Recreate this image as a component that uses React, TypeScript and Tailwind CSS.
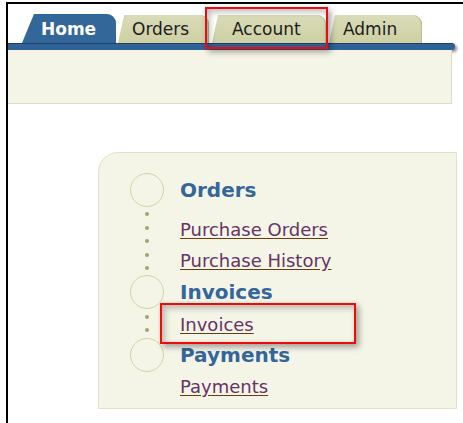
import React from 'react';

type Tab = {
  label: string;
  width: string;
  pad: string;
  active?: boolean;
};

type Section = {
  title: string;
  links: string[];
};

const tabs: Tab[] = [
  { label: 'Home', width: 'w-[94px]', pad: 'pl-[19px]', active: true },
  { label: 'Orders', width: 'w-[91px]', pad: 'pl-[14px]' },
  { label: 'Account', width: 'w-[114px]', pad: 'pl-[20px]' },
  { label: 'Admin', width: 'w-[93px]', pad: 'pl-[14px]' },
];

const sections: Section[] = [
  { title: 'Orders', links: ['Purchase Orders', 'Purchase History'] },
  { title: 'Invoices', links: ['Invoices'] },
  { title: 'Payments', links: ['Payments'] },
];

const TabButton = ({ tab }: { tab: Tab }) => {
  if (tab.active) {
    return (
      <div
        className={`${tab.width} ${tab.pad} h-[29px] flex items-center pt-[1px] bg-[#336699] rounded-tr-[9px] [clip-path:polygon(12px_0,100%_0,100%_100%,0_100%)] text-white font-bold text-[17px] leading-[20px]`}
      >
        {tab.label}
      </div>
    );
  }
  return (
    <div
      className={`${tab.width} ${tab.pad} h-[28px] mt-[1px] flex items-center bg-gradient-to-b from-[#dadcb8] to-[#cdd0a3] rounded-tr-[9px] [clip-path:polygon(6px_0,100%_0,100%_100%,0_100%)] shadow-[inset_-1px_0_0_#b9bc8e] text-[#1c1c1c] text-[17px] leading-[20px]`}
    >
      {tab.label}
    </div>
  );
};

const Dots = ({ count, className }: { count: number; className: string }) => (
  <div className={`col-start-1 flex flex-col items-center justify-between ${className}`}>
    {Array.from({ length: count }).map((_, i) => (
      <span key={i} className="block w-[4px] h-[4px] rounded-full bg-[#a2a36f]" />
    ))}
  </div>
);

const Circle = ({ row }: { row: string }) => (
  <div className={`col-start-1 ${row} w-[34px] h-[34px] rounded-full border-[1.5px] border-[#d3d4a6]`} />
);

const Heading = ({ row, children }: { row: string; children: React.ReactNode }) => (
  <div className={`col-start-2 ${row} self-center text-[20px] leading-[24px] font-bold text-[#35669b]`}>
    {children}
  </div>
);

const NavLink = ({ row, className, children }: { row: string; className: string; children: React.ReactNode }) => (
  <a
    href="#"
    className={`col-start-2 ${row} ${className} justify-self-start text-[18px] leading-[21px] text-[#663366] underline decoration-[#6b3a0e] underline-offset-[2px]`}
  >
    {children}
  </a>
);

export default function App() {
  return (
    <div className="relative w-[463px] h-[423px] bg-white overflow-hidden font-['DejaVu_Sans','Verdana',sans-serif]">
      <div className="ml-[6px] mt-[2px] h-[421px] border-l-2 border-t-2 border-black">
        {/* tab strip */}
        <div className="flex items-end gap-[2px] pt-[10px] pl-[14px]">
          {tabs.map((t, i) => (
            <div key={t.label} className={i > 1 ? 'ml-[1px]' : ''}>
              <TabButton tab={t} />
            </div>
          ))}
        </div>
        <div className="w-[447px] h-[7px] bg-[#2f6297] border-t border-[#1e406b] rounded-r-full shadow-[2px_2px_3px_rgba(0,0,0,0.45)]" />
        <div className="w-[444px] h-[54px] bg-[#f4f5e7] border-r border-b border-[#dcdfc2]" />

        {/* task list panel */}
        <div className="ml-[90px] mt-[48px] w-[359px] h-[257px] bg-[#f4f5e7] border border-[#dfe2c5] rounded-tl-[20px] pt-[20px] pl-[31px]">
          <div className="grid grid-cols-[34px_1fr] gap-x-[16px] grid-rows-[34px_34px_34px_34px_29px_34px_31px]">
            <Circle row="row-start-1" />
            <Heading row="row-start-1">{sections[0].title}</Heading>
            <Dots count={5} className="row-start-2 row-span-2 py-[5px]" />
            <NavLink row="row-start-2" className="self-end mb-[1px]">
              {sections[0].links[0]}
            </NavLink>
            <NavLink row="row-start-3" className="self-end mb-[4px]">
              {sections[0].links[1]}
            </NavLink>

            <Circle row="row-start-4" />
            <Heading row="row-start-4">{sections[1].title}</Heading>
            <Dots count={2} className="row-start-5 py-[6px]" />
            <NavLink row="row-start-5" className="self-end mb-[3px]">
              {sections[1].links[0]}
            </NavLink>

            <Circle row="row-start-6" />
            <Heading row="row-start-6">{sections[2].title}</Heading>
            <NavLink row="row-start-7" className="self-start mt-[4px]">
              {sections[2].links[0]}
            </NavLink>
          </div>
        </div>
      </div>

      {/* callout frames */}
      <div className="absolute left-[205px] top-[7px] w-[123px] h-[42px] border-2 border-[#f20a0a] shadow-[3px_3px_6px_rgba(0,0,0,0.35),inset_3px_3px_6px_rgba(0,0,0,0.25)]" />
      <div className="absolute left-[160px] top-[303px] w-[196px] h-[41px] border-2 border-[#f20a0a] shadow-[3px_3px_6px_rgba(0,0,0,0.35),inset_3px_3px_6px_rgba(0,0,0,0.25)]" />
    </div>
  );
}
